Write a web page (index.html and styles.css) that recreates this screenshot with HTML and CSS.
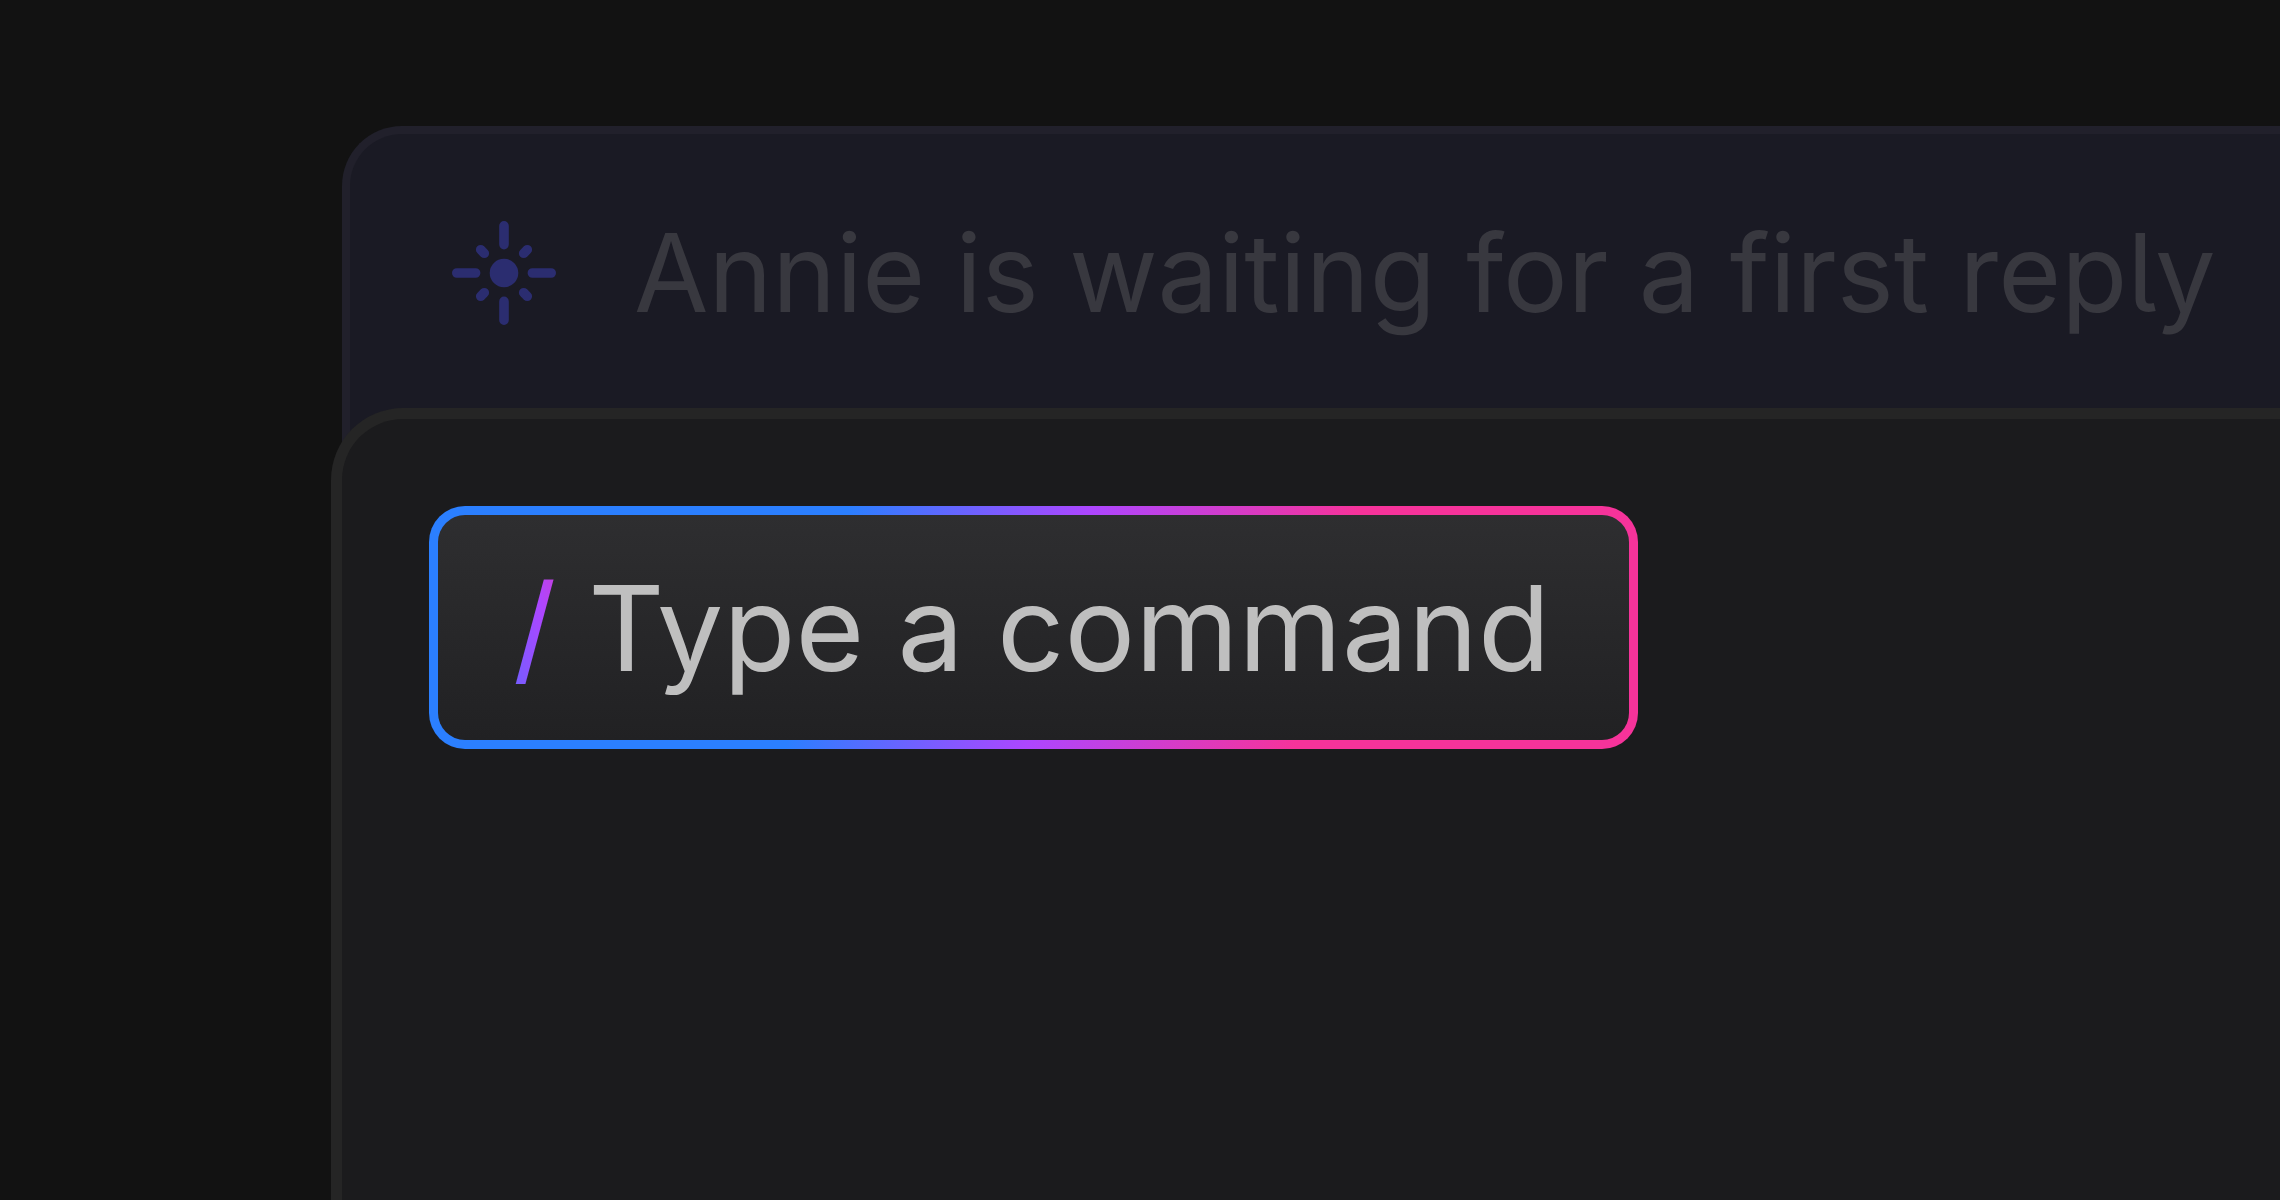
FILE: index.html
```html
<!DOCTYPE html>
<html lang="en">
<head>
  <meta charset="utf-8">
  <title>Command</title>
  <link rel="stylesheet" href="styles.css">
</head>
<body>

<main class="stage">
  <section class="notice">
    <svg class="notice-icon" viewBox="0 0 104 104" aria-hidden="true">
      <circle cx="52" cy="52" r="14.3" fill="currentColor"/>
      <g stroke="currentColor" stroke-width="9.6" stroke-linecap="round">
        <path d="M52 4.8V23.6M52 80.4V99.2M4.8 52H23.6M80.4 52H99.2"/>
        <path d="M28.7 28.7L32.3 32.3M75.3 28.7L71.7 32.3M28.7 75.3L32.3 71.7M75.3 75.3L71.7 71.7"/>
      </g>
    </svg>
    <p class="notice-text">Annie is waiting for a first reply</p>
  </section>

  <section class="panel">
    <form class="command">
      <label class="slash" for="command">/</label>
      <input class="command-input" type="text" id="command" placeholder="Type a command" autocomplete="off">
    </form>
  </section>
</main>

</body>
</html>
```

FILE: styles.css
```css
* {
  box-sizing: border-box;
}

body {
  margin: 0;
  background: #121212;
  font-family: Inter, sans-serif;
}

.stage {
  display: flex;
  flex-direction: column;
  min-height: 100vh;
  padding: 126px 0 0 331px;
  overflow: hidden;
}

/* dimmed card tucked behind the panel */
.notice {
  display: flex;
  align-items: center;
  gap: 78px;
  margin-left: 11px;
  padding: 73px 0 143px 102px;
  border: 8px solid #21202b;
  border-width: 8px 0 0 8px;
  border-radius: 60px 0 0 0;
  background: #1a1a24;
  white-space: nowrap;
}

.notice-icon {
  flex: none;
  width: 104px;
  height: 104px;
  color: #2b2d70;
}

.notice-text {
  margin: 0;
  font-size: 108px;
  line-height: 132px;
  font-feature-settings: "cv05";
  color: #38383f;
}

.panel {
  position: relative;
  flex: 1;
  margin-top: -74px;
  padding: 87px;
  border: 11px solid #252525;
  border-width: 11px 0 0 11px;
  border-radius: 72px 0 0 0;
  background: #1b1b1d;
}

.command {
  display: flex;
  align-items: center;
  gap: 32px;
  width: 1209px;
  max-width: 100%;
  padding: 45px 75px;
  border: 9px solid transparent;
  border-radius: 36px;
  background:
    linear-gradient(#2e2e30, #212123) padding-box,
    linear-gradient(105deg, #2b7fff 33%, #ad46ff 52%, #f6339a 73%) border-box;
  box-shadow: 0 12px 60px rgba(255, 255, 255, 0.01);
}

.slash {
  font-size: 120px;
  line-height: 135px;
  background: linear-gradient(75deg, #705fff, #ad46ff 65%, #c83fdc);
  -webkit-background-clip: text;
  background-clip: text;
  color: transparent;
}

.command-input {
  flex: 1;
  min-width: 0;
  height: 135px;
  margin: 0;
  padding: 0;
  border: 0;
  outline: 0;
  background: none;
  font: inherit;
  font-size: 118px;
  color: #bfbfbf;
}

.command-input::placeholder {
  color: #bfbfbf;
  opacity: 1;
}
```
